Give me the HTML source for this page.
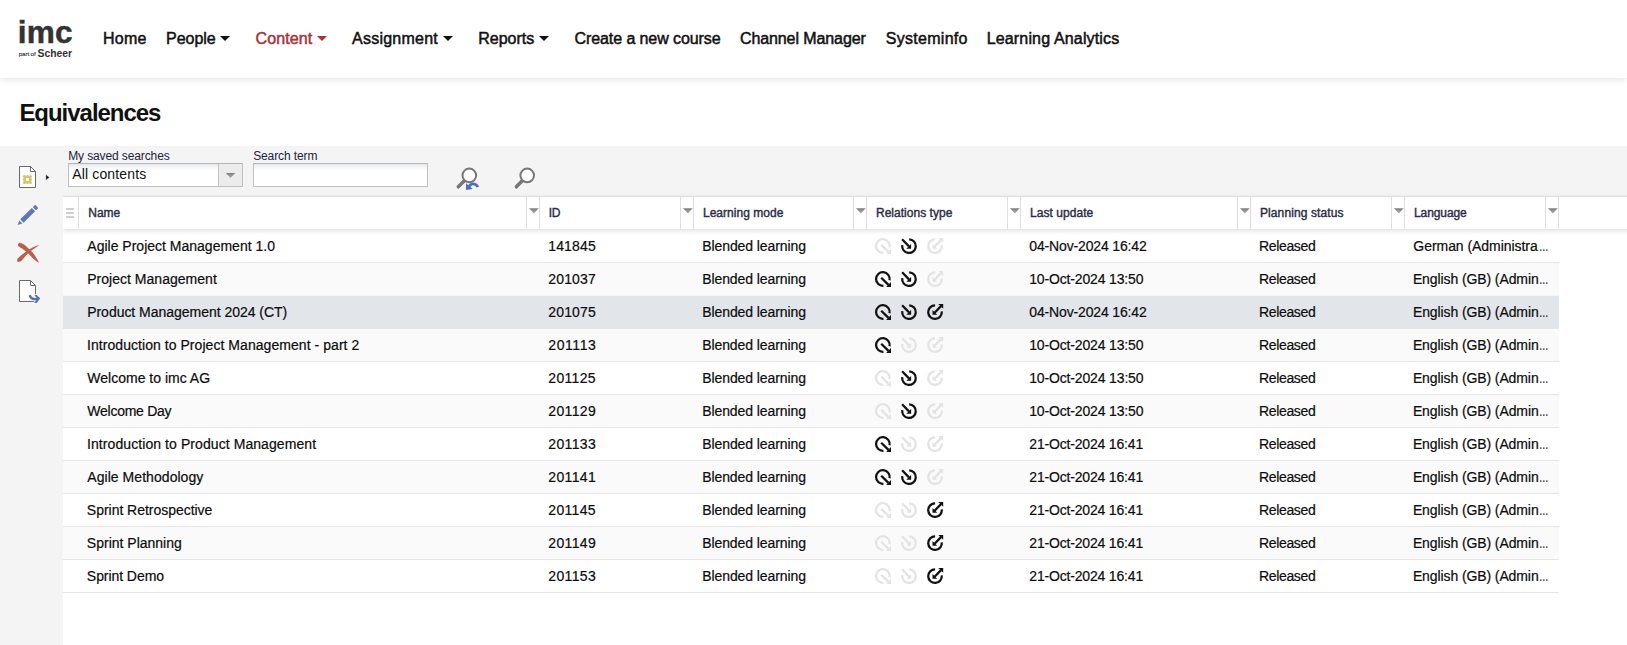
<!DOCTYPE html>
<html lang="en">
<head>
<meta charset="utf-8">
<title>Equivalences</title>
<style>
html,body{margin:0;padding:0;}
body{width:1627px;height:645px;overflow:hidden;background:#fff;position:relative;font-family:'Liberation Sans',sans-serif;}
.t{position:absolute;white-space:pre;display:block;}
.nav{-webkit-text-stroke:0.5px currentColor;}
.th{-webkit-text-stroke:0.4px currentColor;}
.td{-webkit-text-stroke:0.2px currentColor;}
.abs{position:absolute;}
#header{left:0;top:0;width:1627px;height:78px;background:#fff;box-shadow:0 1px 7px rgba(0,0,0,0.13);}
#graybar{left:0;top:146px;width:1627px;height:51px;background:#f4f4f4;}
#leftbar{left:0;top:146px;width:63px;height:499px;background:#f4f4f4;}
#thead{left:0;top:6px;width:1600px;height:33px;background:#fff;border-top:1px solid #dcdcdc;box-sizing:border-box;box-shadow:0 2px 5px rgba(0,0,0,0.12);}
.row{position:absolute;left:63px;width:1496px;height:32px;border-bottom:1px solid #e6e6e6;background:#fff;}
.row.even{background:#fafafa;}
.row.sel{background:#e2e6ea;border-bottom-color:#e2e6ea;}
.sep{position:absolute;top:197px;width:1px;height:32px;background:#dedede;}
.caret{position:absolute;width:0;height:0;border-left:5px solid transparent;border-right:5px solid transparent;border-top:5px solid #111;}
.dd{position:absolute;width:0;height:0;border-left:4.5px solid transparent;border-right:4.5px solid transparent;border-top:5px solid #8a8a8a;top:210px;}
.inp{position:absolute;box-sizing:border-box;background:linear-gradient(#e6eaee,#fff 6px);border:1px solid #c0c0c0;border-top-color:#b4b4b4;}
</style>
</head>
<body>
<div id="header" class="abs"></div>
<div id="graybar" class="abs"></div>
<div id="leftbar" class="abs"></div>
<div class="row" style="top:230px"></div>
<div class="row even" style="top:263px;border-bottom:1px dotted #eef0f2"></div>
<div class="row sel" style="top:296px"></div>
<div class="row even" style="top:329px"></div>
<div class="row" style="top:362px"></div>
<div class="row even" style="top:395px"></div>
<div class="row" style="top:428px"></div>
<div class="row even" style="top:461px"></div>
<div class="row" style="top:494px"></div>
<div class="row even" style="top:527px"></div>
<div class="row" style="top:560px"></div>
<div class="abs" style="left:63px;top:190px;width:1564px;height:60px;overflow:hidden;pointer-events:none"><div id="thead" class="abs"></div></div>
<div class="sep" style="left:78px"></div>
<div class="sep" style="left:526px"></div>
<div class="sep" style="left:539px"></div>
<div class="sep" style="left:680px"></div>
<div class="sep" style="left:693px"></div>
<div class="sep" style="left:853px"></div>
<div class="sep" style="left:866px"></div>
<div class="sep" style="left:1007px"></div>
<div class="sep" style="left:1020px"></div>
<div class="sep" style="left:1237px"></div>
<div class="sep" style="left:1250px"></div>
<div class="sep" style="left:1391px"></div>
<div class="sep" style="left:1404px"></div>
<div class="sep" style="left:1545px"></div>
<div class="sep" style="left:1558px"></div>
<svg class="abs" style="left:528px;top:207.4px" width="12" height="8" viewBox="0 0 12 8"><path d="M1 1.3 H10.7 L5.85 6.6 Z" fill="url(#gd)"/></svg>
<svg class="abs" style="left:682px;top:207.4px" width="12" height="8" viewBox="0 0 12 8"><path d="M1 1.3 H10.7 L5.85 6.6 Z" fill="url(#gd)"/></svg>
<svg class="abs" style="left:855px;top:207.4px" width="12" height="8" viewBox="0 0 12 8"><path d="M1 1.3 H10.7 L5.85 6.6 Z" fill="url(#gd)"/></svg>
<svg class="abs" style="left:1009px;top:207.4px" width="12" height="8" viewBox="0 0 12 8"><path d="M1 1.3 H10.7 L5.85 6.6 Z" fill="url(#gd)"/></svg>
<svg class="abs" style="left:1239px;top:207.4px" width="12" height="8" viewBox="0 0 12 8"><path d="M1 1.3 H10.7 L5.85 6.6 Z" fill="url(#gd)"/></svg>
<svg class="abs" style="left:1393px;top:207.4px" width="12" height="8" viewBox="0 0 12 8"><path d="M1 1.3 H10.7 L5.85 6.6 Z" fill="url(#gd)"/></svg>
<svg class="abs" style="left:1547px;top:207.4px" width="12" height="8" viewBox="0 0 12 8"><path d="M1 1.3 H10.7 L5.85 6.6 Z" fill="url(#gd)"/></svg>
<div class="caret" style="left:220.4px;top:36px;border-top-color:#111"></div>
<div class="caret" style="left:316.8px;top:36px;border-top-color:#a6343a"></div>
<div class="caret" style="left:443.2px;top:36px;border-top-color:#111"></div>
<div class="caret" style="left:539.2px;top:36px;border-top-color:#111"></div>
<div class="inp" style="left:68px;top:163px;width:175px;height:24px;"></div>
<div class="abs" style="left:218px;top:164px;width:24px;height:22px;background:#ececec;border-left:1px solid #c4c4c4;box-sizing:border-box;"></div>
<svg class="abs" style="left:225px;top:172px" width="12" height="8" viewBox="0 0 12 8"><defs><linearGradient id="gd" x1="0" y1="0" x2="0" y2="1"><stop offset="0" stop-color="#7d7d7d"/><stop offset="1" stop-color="#b0b0b0"/></linearGradient></defs><path d="M0.8 1 H10.3 L5.55 6 Z" fill="url(#gd)"/></svg>
<div class="inp" style="left:253px;top:163px;width:175px;height:24px;"></div>
<div class="abs" style="left:66px;top:208px;width:8px;height:2px;background:#cfcfcf;"></div>
<div class="abs" style="left:66px;top:212px;width:8px;height:2px;background:#cfcfcf;"></div>
<div class="abs" style="left:66px;top:216px;width:8px;height:2px;background:#cfcfcf;"></div>
<span class="t" id="logo" style="left:17.7px;top:13px;font-size:31.6px;line-height:38px;font-weight:bold;color:#333;letter-spacing:0.25px;-webkit-text-stroke:0.45px #333;">imc</span>
<span class="t" style="left:18.8px;top:50.4px;font-size:6.2px;line-height:8px;color:#3a3a3a;letter-spacing:-0.12px;-webkit-text-stroke:0.15px #3a3a3a;">part of</span>
<span class="t" style="left:37.6px;top:48.1px;font-size:10.4px;line-height:12px;font-weight:bold;color:#333;letter-spacing:-0.05px;">Scheer</span>
<svg class="abs" style="left:452px;top:162px" width="34" height="32" viewBox="452 162 34 32">
<line x1="464.3" y1="180.8" x2="458.3" y2="186.8" stroke="#777" stroke-width="3.5" stroke-linecap="round"/>
<circle cx="469.3" cy="175.4" r="6.8" fill="#fff" stroke="#777" stroke-width="2"/>
<path d="M466 190 L466 183.2 L468.2 185.2 C471 181.4 476.5 181.6 479.2 186.6 L476.6 187.4 C474.8 184.6 472 184.6 470.4 186.8 L472.6 188.9 Z" fill="#4e6db6"/>
</svg>
<svg class="abs" style="left:510px;top:162px" width="34" height="32" viewBox="510 162 34 32">
<line x1="522.2" y1="180.8" x2="516.4" y2="186.8" stroke="#777" stroke-width="3.5" stroke-linecap="round"/>
<circle cx="527.2" cy="175.4" r="6.8" fill="#fff" stroke="#777" stroke-width="2"/>
</svg>
<svg class="abs" style="left:15px;top:162px" width="40" height="30" viewBox="15 162 40 30">
<path d="M19.5 166.5 H30.5 L35.5 171.5 V187.5 H19.5 Z" fill="#fff" stroke="#6a6a6a" stroke-width="1"/>
<path d="M30.5 166.5 V171.5 H35.5" fill="none" stroke="#6a6a6a" stroke-width="1"/>
<g fill="#d8c36c"><circle cx="24.4" cy="176.5" r="1.5"/><circle cx="27.4" cy="176.4" r="1.5"/><circle cx="30.4" cy="176.5" r="1.5"/><circle cx="24.299999999999997" cy="179.5" r="1.5"/><circle cx="30.5" cy="179.5" r="1.5"/><circle cx="24.4" cy="182.5" r="1.5"/><circle cx="27.4" cy="182.6" r="1.5"/><circle cx="30.4" cy="182.5" r="1.5"/><path d="M24.4 176.5 L30.4 176.5 L30.4 182.5 L24.4 182.5 Z M27.4 177.2 L25.099999999999998 179.5 L27.4 181.8 L29.7 179.5 Z" fill-rule="evenodd"/></g>
<path d="M45.9 174.6 L49.4 177.4 L45.9 180.2 Z" fill="#15152a" stroke="#fff" stroke-opacity="0.6" stroke-width="0.5"/>
</svg>
<svg class="abs" style="left:14px;top:200px" width="30" height="30" viewBox="14 200 30 30">
<g transform="translate(17.7 225.1) rotate(-44.5)">
<path d="M0 0 L4.4 -2.2 L4.4 2.2 Z" fill="#5c78b8"/>
<rect x="5.9" y="-2.35" width="16.2" height="4.7" fill="#5c78b8"/>
<rect x="23.4" y="-2.35" width="3.3" height="4.7" rx="0.9" fill="#5c78b8"/>
</g></svg>
<svg class="abs" style="left:14px;top:238px" width="30" height="30" viewBox="14 238 30 30">
<path d="M20.05 242.90 C20.85 243.01 21.98 243.20 23.30 244.05 C24.62 244.90 26.40 246.61 27.95 248.00 C29.50 249.39 31.28 250.89 32.60 252.40 C33.92 253.91 34.80 255.38 35.85 257.05 C36.90 258.72 38.38 261.46 38.90 262.40 C39.42 263.34 39.38 262.89 38.95 262.70 C38.52 262.51 37.36 262.03 36.30 261.25 C35.24 260.47 33.99 259.32 32.60 258.00 C31.21 256.68 29.50 254.78 27.95 253.35 C26.40 251.92 24.77 250.48 23.30 249.40 C21.83 248.32 19.99 247.58 19.10 246.85 C18.21 246.12 18.05 245.57 17.95 245.00 C17.85 244.43 18.15 243.75 18.50 243.40 C18.85 243.05 19.25 242.79 20.05 242.90 Z" fill="#bc5f47"/>
<path d="M18.20 258.00 C18.97 257.19 20.58 255.83 21.90 254.75 C23.22 253.67 24.47 252.62 26.10 251.50 C27.73 250.38 30.15 248.89 31.70 248.00 C33.25 247.11 34.20 246.65 35.40 246.15 C36.60 245.65 38.31 245.14 38.90 245.00 C39.49 244.86 39.46 244.88 38.95 245.30 C38.44 245.73 36.98 246.75 35.85 247.55 C34.72 248.35 33.39 249.18 32.15 250.10 C30.91 251.02 29.64 251.94 28.40 253.10 C27.16 254.26 25.86 255.77 24.70 257.05 C23.54 258.33 22.46 259.98 21.45 260.80 C20.44 261.62 19.34 261.88 18.65 261.95 C17.96 262.02 17.53 261.59 17.30 261.20 C17.07 260.81 17.10 260.13 17.25 259.60 C17.40 259.07 17.43 258.81 18.20 258.00 Z" fill="#bc5f47"/>
</svg>
<svg class="abs" style="left:15px;top:276px" width="30" height="30" viewBox="15 276 30 30">
<path d="M19.5 280.5 H30.5 L35.5 285.5 V301.5 H19.5 Z" fill="#fff" stroke="#6a6a6a" stroke-width="1"/>
<path d="M30.5 280.5 V285.5 H35.5" fill="none" stroke="#6a6a6a" stroke-width="1"/>
<path d="M19 293.9 H36 V302 H19 Z" fill="none"/>
<g stroke="#fff" stroke-width="3.6" stroke-opacity="0.9" fill="none" stroke-linejoin="round" stroke-linecap="round"><path d="M30 296 C31 298.6 33.6 299.7 37.6 299.1"/><path d="M35.2 295.9 L39.3 298.3 L35.4 302.3"/></g>
<path d="M30 296 C31 298.6 33.6 299.7 37.6 299.1" fill="none" stroke="#5571b5" stroke-width="2.4" stroke-linecap="round"/>
<path d="M34.3 295.1 L36.6 295.1 L40.3 298.2 L36.7 303 L34.1 303 L37.4 298.9 Z" fill="#5571b5"/>
</svg>
<svg width="0" height="0" style="position:absolute"><defs>
<g id="r1"><path d="M14.55 9.2 A6.8 6.8 0 1 0 8.45 14.77" fill="none" stroke="currentColor" stroke-width="2.25"/><path d="M6.2 6.7 L13.5 13.9" stroke="currentColor" stroke-width="2.25" fill="none"/><path d="M16 16 L16 11.1 L11.1 16 Z" fill="currentColor"/></g>
<g id="r2"><path d="M8.2 1.36 A6.8 6.8 0 1 1 1.25 7.2" fill="none" stroke="currentColor" stroke-width="2.25"/><path d="M1.1 1.3 L8 8.4" stroke="currentColor" stroke-width="2.25" fill="none"/><path d="M10.1 10.7 L10.1 5.9 L5.3 10.7 Z" fill="currentColor"/></g>
<g id="r3"><path d="M8.1 1.35 A6.8 6.8 0 1 0 14.75 7.3" fill="none" stroke="currentColor" stroke-width="2.25"/><path d="M7.6 8.7 L14 2.1" stroke="currentColor" stroke-width="2.25" fill="none"/><path d="M16.2 -0.1 L11.3 -0.1 L16.2 4.8 Z" fill="currentColor"/><path d="M5.5 10.8 L5.5 6.1 L10.2 10.8 Z" fill="currentColor"/></g>
</defs></svg>
<svg class="abs" style="left:874.96px;top:237.85px;color:#e3e3e3;overflow:visible" width="17" height="17" viewBox="0 0 17 17"><use href="#r1"/></svg>
<svg class="abs" style="left:900.96px;top:237.85px;color:#111;overflow:visible" width="17" height="17" viewBox="0 0 17 17"><use href="#r2"/></svg>
<svg class="abs" style="left:926.96px;top:237.85px;color:#e3e3e3;overflow:visible" width="17" height="17" viewBox="0 0 17 17"><use href="#r3"/></svg>
<svg class="abs" style="left:874.96px;top:270.85px;color:#111;overflow:visible" width="17" height="17" viewBox="0 0 17 17"><use href="#r1"/></svg>
<svg class="abs" style="left:900.96px;top:270.85px;color:#111;overflow:visible" width="17" height="17" viewBox="0 0 17 17"><use href="#r2"/></svg>
<svg class="abs" style="left:926.96px;top:270.85px;color:#e3e3e3;overflow:visible" width="17" height="17" viewBox="0 0 17 17"><use href="#r3"/></svg>
<svg class="abs" style="left:874.96px;top:303.85px;color:#111;overflow:visible" width="17" height="17" viewBox="0 0 17 17"><use href="#r1"/></svg>
<svg class="abs" style="left:900.96px;top:303.85px;color:#111;overflow:visible" width="17" height="17" viewBox="0 0 17 17"><use href="#r2"/></svg>
<svg class="abs" style="left:926.96px;top:303.85px;color:#111;overflow:visible" width="17" height="17" viewBox="0 0 17 17"><use href="#r3"/></svg>
<svg class="abs" style="left:874.96px;top:336.85px;color:#111;overflow:visible" width="17" height="17" viewBox="0 0 17 17"><use href="#r1"/></svg>
<svg class="abs" style="left:900.96px;top:336.85px;color:#e3e3e3;overflow:visible" width="17" height="17" viewBox="0 0 17 17"><use href="#r2"/></svg>
<svg class="abs" style="left:926.96px;top:336.85px;color:#e3e3e3;overflow:visible" width="17" height="17" viewBox="0 0 17 17"><use href="#r3"/></svg>
<svg class="abs" style="left:874.96px;top:369.85px;color:#e3e3e3;overflow:visible" width="17" height="17" viewBox="0 0 17 17"><use href="#r1"/></svg>
<svg class="abs" style="left:900.96px;top:369.85px;color:#111;overflow:visible" width="17" height="17" viewBox="0 0 17 17"><use href="#r2"/></svg>
<svg class="abs" style="left:926.96px;top:369.85px;color:#e3e3e3;overflow:visible" width="17" height="17" viewBox="0 0 17 17"><use href="#r3"/></svg>
<svg class="abs" style="left:874.96px;top:402.85px;color:#e3e3e3;overflow:visible" width="17" height="17" viewBox="0 0 17 17"><use href="#r1"/></svg>
<svg class="abs" style="left:900.96px;top:402.85px;color:#111;overflow:visible" width="17" height="17" viewBox="0 0 17 17"><use href="#r2"/></svg>
<svg class="abs" style="left:926.96px;top:402.85px;color:#e3e3e3;overflow:visible" width="17" height="17" viewBox="0 0 17 17"><use href="#r3"/></svg>
<svg class="abs" style="left:874.96px;top:435.85px;color:#111;overflow:visible" width="17" height="17" viewBox="0 0 17 17"><use href="#r1"/></svg>
<svg class="abs" style="left:900.96px;top:435.85px;color:#e3e3e3;overflow:visible" width="17" height="17" viewBox="0 0 17 17"><use href="#r2"/></svg>
<svg class="abs" style="left:926.96px;top:435.85px;color:#e3e3e3;overflow:visible" width="17" height="17" viewBox="0 0 17 17"><use href="#r3"/></svg>
<svg class="abs" style="left:874.96px;top:468.85px;color:#111;overflow:visible" width="17" height="17" viewBox="0 0 17 17"><use href="#r1"/></svg>
<svg class="abs" style="left:900.96px;top:468.85px;color:#111;overflow:visible" width="17" height="17" viewBox="0 0 17 17"><use href="#r2"/></svg>
<svg class="abs" style="left:926.96px;top:468.85px;color:#e3e3e3;overflow:visible" width="17" height="17" viewBox="0 0 17 17"><use href="#r3"/></svg>
<svg class="abs" style="left:874.96px;top:501.85px;color:#e3e3e3;overflow:visible" width="17" height="17" viewBox="0 0 17 17"><use href="#r1"/></svg>
<svg class="abs" style="left:900.96px;top:501.85px;color:#e3e3e3;overflow:visible" width="17" height="17" viewBox="0 0 17 17"><use href="#r2"/></svg>
<svg class="abs" style="left:926.96px;top:501.85px;color:#111;overflow:visible" width="17" height="17" viewBox="0 0 17 17"><use href="#r3"/></svg>
<svg class="abs" style="left:874.96px;top:534.85px;color:#e3e3e3;overflow:visible" width="17" height="17" viewBox="0 0 17 17"><use href="#r1"/></svg>
<svg class="abs" style="left:900.96px;top:534.85px;color:#e3e3e3;overflow:visible" width="17" height="17" viewBox="0 0 17 17"><use href="#r2"/></svg>
<svg class="abs" style="left:926.96px;top:534.85px;color:#111;overflow:visible" width="17" height="17" viewBox="0 0 17 17"><use href="#r3"/></svg>
<svg class="abs" style="left:874.96px;top:567.85px;color:#e3e3e3;overflow:visible" width="17" height="17" viewBox="0 0 17 17"><use href="#r1"/></svg>
<svg class="abs" style="left:900.96px;top:567.85px;color:#e3e3e3;overflow:visible" width="17" height="17" viewBox="0 0 17 17"><use href="#r2"/></svg>
<svg class="abs" style="left:926.96px;top:567.85px;color:#111;overflow:visible" width="17" height="17" viewBox="0 0 17 17"><use href="#r3"/></svg>
<span class="t nav" style="left:103.06px;top:31.00px;font-size:16px;line-height:16px;letter-spacing:0.210px;color:#111;font-weight:normal;">Home</span>
<span class="t nav" style="left:166.06px;top:31.00px;font-size:16px;line-height:16px;letter-spacing:-0.033px;color:#111;font-weight:normal;">People</span>
<span class="t nav" style="left:255.59px;top:31.00px;font-size:16px;line-height:16px;letter-spacing:0.076px;color:#a6343a;font-weight:normal;">Content</span>
<span class="t nav" style="left:352.06px;top:31.00px;font-size:16px;line-height:16px;letter-spacing:0.238px;color:#111;font-weight:normal;">Assignment</span>
<span class="t nav" style="left:478.22px;top:31.00px;font-size:16px;line-height:16px;letter-spacing:-0.005px;color:#111;font-weight:normal;">Reports</span>
<span class="t nav" style="left:574.56px;top:31.00px;font-size:16px;line-height:16px;letter-spacing:-0.090px;color:#111;font-weight:normal;">Create a new course</span>
<span class="t nav" style="left:739.93px;top:31.00px;font-size:16px;line-height:16px;letter-spacing:-0.091px;color:#111;font-weight:normal;">Channel Manager</span>
<span class="t nav" style="left:885.80px;top:31.00px;font-size:16px;line-height:16px;letter-spacing:0.278px;color:#111;font-weight:normal;">Systeminfo</span>
<span class="t nav" style="left:986.68px;top:31.00px;font-size:16px;line-height:16px;letter-spacing:0.159px;color:#111;font-weight:normal;">Learning Analytics</span>
<span class="t " style="left:19.39px;top:101.00px;font-size:24px;line-height:24px;letter-spacing:-1.030px;color:#111;font-weight:bold;">Equivalences</span>
<span class="t " style="left:68.17px;top:150.00px;font-size:12px;line-height:12px;letter-spacing:-0.112px;color:#23233f;font-weight:normal;">My saved searches</span>
<span class="t " style="left:253.14px;top:150.00px;font-size:12px;line-height:12px;letter-spacing:-0.104px;color:#23233f;font-weight:normal;">Search term</span>
<span class="t " style="left:72.16px;top:167.00px;font-size:14px;line-height:14px;letter-spacing:0.156px;color:#111;font-weight:normal;">All contents</span>
<span class="t th" style="left:88.27px;top:207.00px;font-size:12px;line-height:12px;letter-spacing:0.001px;color:#2c2c48;font-weight:normal;">Name</span>
<span class="t th" style="left:548.77px;top:207.00px;font-size:12px;line-height:12px;letter-spacing:-0.311px;color:#2c2c48;font-weight:normal;">ID</span>
<span class="t th" style="left:702.94px;top:207.00px;font-size:12px;line-height:12px;letter-spacing:0.028px;color:#2c2c48;font-weight:normal;">Learning mode</span>
<span class="t th" style="left:875.98px;top:207.00px;font-size:12px;line-height:12px;letter-spacing:0.024px;color:#2c2c48;font-weight:normal;">Relations type</span>
<span class="t th" style="left:1029.94px;top:207.00px;font-size:12px;line-height:12px;letter-spacing:0.062px;color:#2c2c48;font-weight:normal;">Last update</span>
<span class="t th" style="left:1259.98px;top:207.00px;font-size:12px;line-height:12px;letter-spacing:0.104px;color:#2c2c48;font-weight:normal;">Planning status</span>
<span class="t th" style="left:1413.94px;top:207.00px;font-size:12px;line-height:12px;letter-spacing:-0.079px;color:#2c2c48;font-weight:normal;">Language</span>
<span class="t td" style="left:87.31px;top:239.00px;font-size:14px;line-height:14px;letter-spacing:0.003px;color:#0c0c0c;font-weight:normal;">Agile Project Management 1.0</span>
<span class="t td" style="left:548.19px;top:239.00px;font-size:14px;line-height:14px;letter-spacing:0.173px;color:#0c0c0c;font-weight:normal;">141845</span>
<span class="t td" style="left:702.16px;top:239.00px;font-size:14px;line-height:14px;letter-spacing:-0.075px;color:#0c0c0c;font-weight:normal;">Blended learning</span>
<span class="t td" style="left:1029.33px;top:239.00px;font-size:14px;line-height:14px;letter-spacing:-0.157px;color:#0c0c0c;font-weight:normal;">04-Nov-2024 16:42</span>
<span class="t td" style="left:1259.02px;top:239.00px;font-size:14px;line-height:14px;letter-spacing:-0.355px;color:#0c0c0c;font-weight:normal;">Released</span>
<span class="t td" style="left:1413.35px;top:239.00px;font-size:14px;line-height:14px;letter-spacing:-0.054px;color:#0c0c0c;font-weight:normal;">German (Administra</span>
<span class="t td" style="left:87.17px;top:272.00px;font-size:14px;line-height:14px;letter-spacing:0.028px;color:#0c0c0c;font-weight:normal;">Project Management</span>
<span class="t td" style="left:548.30px;top:272.00px;font-size:14px;line-height:14px;letter-spacing:0.138px;color:#0c0c0c;font-weight:normal;">201037</span>
<span class="t td" style="left:702.17px;top:272.00px;font-size:14px;line-height:14px;letter-spacing:-0.076px;color:#0c0c0c;font-weight:normal;">Blended learning</span>
<span class="t td" style="left:1029.19px;top:272.00px;font-size:14px;line-height:14px;letter-spacing:-0.150px;color:#0c0c0c;font-weight:normal;">10-Oct-2024 13:50</span>
<span class="t td" style="left:1259.02px;top:272.00px;font-size:14px;line-height:14px;letter-spacing:-0.355px;color:#0c0c0c;font-weight:normal;">Released</span>
<span class="t td" style="left:1412.88px;top:272.00px;font-size:14px;line-height:14px;letter-spacing:-0.099px;color:#0c0c0c;font-weight:normal;">English (GB) (Admin</span>
<span class="t td" style="left:87.18px;top:305.00px;font-size:14px;line-height:14px;letter-spacing:-0.026px;color:#0c0c0c;font-weight:normal;">Product Management 2024 (CT)</span>
<span class="t td" style="left:548.31px;top:305.00px;font-size:14px;line-height:14px;letter-spacing:0.151px;color:#0c0c0c;font-weight:normal;">201075</span>
<span class="t td" style="left:702.18px;top:305.00px;font-size:14px;line-height:14px;letter-spacing:-0.076px;color:#0c0c0c;font-weight:normal;">Blended learning</span>
<span class="t td" style="left:1029.34px;top:305.00px;font-size:14px;line-height:14px;letter-spacing:-0.157px;color:#0c0c0c;font-weight:normal;">04-Nov-2024 16:42</span>
<span class="t td" style="left:1259.03px;top:305.00px;font-size:14px;line-height:14px;letter-spacing:-0.355px;color:#0c0c0c;font-weight:normal;">Released</span>
<span class="t td" style="left:1412.91px;top:305.00px;font-size:14px;line-height:14px;letter-spacing:-0.100px;color:#0c0c0c;font-weight:normal;">English (GB) (Admin</span>
<span class="t td" style="left:87.02px;top:338.00px;font-size:14px;line-height:14px;letter-spacing:0.053px;color:#0c0c0c;font-weight:normal;">Introduction to Project Management - part 2</span>
<span class="t td" style="left:548.30px;top:338.00px;font-size:14px;line-height:14px;letter-spacing:0.575px;color:#0c0c0c;font-weight:normal;">201113</span>
<span class="t td" style="left:702.17px;top:338.00px;font-size:14px;line-height:14px;letter-spacing:-0.076px;color:#0c0c0c;font-weight:normal;">Blended learning</span>
<span class="t td" style="left:1029.19px;top:338.00px;font-size:14px;line-height:14px;letter-spacing:-0.150px;color:#0c0c0c;font-weight:normal;">10-Oct-2024 13:50</span>
<span class="t td" style="left:1259.02px;top:338.00px;font-size:14px;line-height:14px;letter-spacing:-0.355px;color:#0c0c0c;font-weight:normal;">Released</span>
<span class="t td" style="left:1412.88px;top:338.00px;font-size:14px;line-height:14px;letter-spacing:-0.099px;color:#0c0c0c;font-weight:normal;">English (GB) (Admin</span>
<span class="t td" style="left:87.35px;top:371.00px;font-size:14px;line-height:14px;letter-spacing:0.004px;color:#0c0c0c;font-weight:normal;">Welcome to imc AG</span>
<span class="t td" style="left:548.29px;top:371.00px;font-size:14px;line-height:14px;letter-spacing:0.325px;color:#0c0c0c;font-weight:normal;">201125</span>
<span class="t td" style="left:702.16px;top:371.00px;font-size:14px;line-height:14px;letter-spacing:-0.075px;color:#0c0c0c;font-weight:normal;">Blended learning</span>
<span class="t td" style="left:1029.19px;top:371.00px;font-size:14px;line-height:14px;letter-spacing:-0.149px;color:#0c0c0c;font-weight:normal;">10-Oct-2024 13:50</span>
<span class="t td" style="left:1259.02px;top:371.00px;font-size:14px;line-height:14px;letter-spacing:-0.355px;color:#0c0c0c;font-weight:normal;">Released</span>
<span class="t td" style="left:1412.89px;top:371.00px;font-size:14px;line-height:14px;letter-spacing:-0.100px;color:#0c0c0c;font-weight:normal;">English (GB) (Admin</span>
<span class="t td" style="left:87.35px;top:404.00px;font-size:14px;line-height:14px;letter-spacing:-0.264px;color:#0c0c0c;font-weight:normal;">Welcome Day</span>
<span class="t td" style="left:548.30px;top:404.00px;font-size:14px;line-height:14px;letter-spacing:0.347px;color:#0c0c0c;font-weight:normal;">201129</span>
<span class="t td" style="left:702.17px;top:404.00px;font-size:14px;line-height:14px;letter-spacing:-0.076px;color:#0c0c0c;font-weight:normal;">Blended learning</span>
<span class="t td" style="left:1029.19px;top:404.00px;font-size:14px;line-height:14px;letter-spacing:-0.150px;color:#0c0c0c;font-weight:normal;">10-Oct-2024 13:50</span>
<span class="t td" style="left:1259.02px;top:404.00px;font-size:14px;line-height:14px;letter-spacing:-0.355px;color:#0c0c0c;font-weight:normal;">Released</span>
<span class="t td" style="left:1412.88px;top:404.00px;font-size:14px;line-height:14px;letter-spacing:-0.099px;color:#0c0c0c;font-weight:normal;">English (GB) (Admin</span>
<span class="t td" style="left:87.01px;top:437.00px;font-size:14px;line-height:14px;letter-spacing:0.079px;color:#0c0c0c;font-weight:normal;">Introduction to Product Management</span>
<span class="t td" style="left:548.29px;top:437.00px;font-size:14px;line-height:14px;letter-spacing:0.346px;color:#0c0c0c;font-weight:normal;">201133</span>
<span class="t td" style="left:702.16px;top:437.00px;font-size:14px;line-height:14px;letter-spacing:-0.075px;color:#0c0c0c;font-weight:normal;">Blended learning</span>
<span class="t td" style="left:1029.29px;top:437.00px;font-size:14px;line-height:14px;letter-spacing:-0.177px;color:#0c0c0c;font-weight:normal;">21-Oct-2024 16:41</span>
<span class="t td" style="left:1259.02px;top:437.00px;font-size:14px;line-height:14px;letter-spacing:-0.355px;color:#0c0c0c;font-weight:normal;">Released</span>
<span class="t td" style="left:1412.89px;top:437.00px;font-size:14px;line-height:14px;letter-spacing:-0.100px;color:#0c0c0c;font-weight:normal;">English (GB) (Admin</span>
<span class="t td" style="left:87.31px;top:470.00px;font-size:14px;line-height:14px;letter-spacing:0.051px;color:#0c0c0c;font-weight:normal;">Agile Methodology</span>
<span class="t td" style="left:548.30px;top:470.00px;font-size:14px;line-height:14px;letter-spacing:0.346px;color:#0c0c0c;font-weight:normal;">201141</span>
<span class="t td" style="left:702.17px;top:470.00px;font-size:14px;line-height:14px;letter-spacing:-0.076px;color:#0c0c0c;font-weight:normal;">Blended learning</span>
<span class="t td" style="left:1029.30px;top:470.00px;font-size:14px;line-height:14px;letter-spacing:-0.178px;color:#0c0c0c;font-weight:normal;">21-Oct-2024 16:41</span>
<span class="t td" style="left:1259.02px;top:470.00px;font-size:14px;line-height:14px;letter-spacing:-0.355px;color:#0c0c0c;font-weight:normal;">Released</span>
<span class="t td" style="left:1412.88px;top:470.00px;font-size:14px;line-height:14px;letter-spacing:-0.099px;color:#0c0c0c;font-weight:normal;">English (GB) (Admin</span>
<span class="t td" style="left:86.86px;top:503.00px;font-size:14px;line-height:14px;letter-spacing:-0.031px;color:#0c0c0c;font-weight:normal;">Sprint Retrospective</span>
<span class="t td" style="left:548.29px;top:503.00px;font-size:14px;line-height:14px;letter-spacing:0.325px;color:#0c0c0c;font-weight:normal;">201145</span>
<span class="t td" style="left:702.16px;top:503.00px;font-size:14px;line-height:14px;letter-spacing:-0.075px;color:#0c0c0c;font-weight:normal;">Blended learning</span>
<span class="t td" style="left:1029.29px;top:503.00px;font-size:14px;line-height:14px;letter-spacing:-0.177px;color:#0c0c0c;font-weight:normal;">21-Oct-2024 16:41</span>
<span class="t td" style="left:1259.02px;top:503.00px;font-size:14px;line-height:14px;letter-spacing:-0.355px;color:#0c0c0c;font-weight:normal;">Released</span>
<span class="t td" style="left:1412.89px;top:503.00px;font-size:14px;line-height:14px;letter-spacing:-0.100px;color:#0c0c0c;font-weight:normal;">English (GB) (Admin</span>
<span class="t td" style="left:86.86px;top:536.00px;font-size:14px;line-height:14px;letter-spacing:-0.004px;color:#0c0c0c;font-weight:normal;">Sprint Planning</span>
<span class="t td" style="left:548.30px;top:536.00px;font-size:14px;line-height:14px;letter-spacing:0.347px;color:#0c0c0c;font-weight:normal;">201149</span>
<span class="t td" style="left:702.17px;top:536.00px;font-size:14px;line-height:14px;letter-spacing:-0.076px;color:#0c0c0c;font-weight:normal;">Blended learning</span>
<span class="t td" style="left:1029.30px;top:536.00px;font-size:14px;line-height:14px;letter-spacing:-0.178px;color:#0c0c0c;font-weight:normal;">21-Oct-2024 16:41</span>
<span class="t td" style="left:1259.02px;top:536.00px;font-size:14px;line-height:14px;letter-spacing:-0.355px;color:#0c0c0c;font-weight:normal;">Released</span>
<span class="t td" style="left:1412.88px;top:536.00px;font-size:14px;line-height:14px;letter-spacing:-0.099px;color:#0c0c0c;font-weight:normal;">English (GB) (Admin</span>
<span class="t td" style="left:86.86px;top:569.00px;font-size:14px;line-height:14px;letter-spacing:-0.065px;color:#0c0c0c;font-weight:normal;">Sprint Demo</span>
<span class="t td" style="left:548.29px;top:569.00px;font-size:14px;line-height:14px;letter-spacing:0.346px;color:#0c0c0c;font-weight:normal;">201153</span>
<span class="t td" style="left:702.16px;top:569.00px;font-size:14px;line-height:14px;letter-spacing:-0.075px;color:#0c0c0c;font-weight:normal;">Blended learning</span>
<span class="t td" style="left:1029.29px;top:569.00px;font-size:14px;line-height:14px;letter-spacing:-0.177px;color:#0c0c0c;font-weight:normal;">21-Oct-2024 16:41</span>
<span class="t td" style="left:1259.02px;top:569.00px;font-size:14px;line-height:14px;letter-spacing:-0.355px;color:#0c0c0c;font-weight:normal;">Released</span>
<span class="t td" style="left:1412.89px;top:569.00px;font-size:14px;line-height:14px;letter-spacing:-0.100px;color:#0c0c0c;font-weight:normal;">English (GB) (Admin</span>
<span class="t td" style="left:1538.8px;top:239px;font-size:14px;line-height:14px;color:#0c0c0c;transform:scaleX(0.68);transform-origin:0 0;">…</span>
<span class="t td" style="left:1538.8px;top:272px;font-size:14px;line-height:14px;color:#0c0c0c;transform:scaleX(0.68);transform-origin:0 0;">…</span>
<span class="t td" style="left:1538.8px;top:305px;font-size:14px;line-height:14px;color:#0c0c0c;transform:scaleX(0.68);transform-origin:0 0;">…</span>
<span class="t td" style="left:1538.8px;top:338px;font-size:14px;line-height:14px;color:#0c0c0c;transform:scaleX(0.68);transform-origin:0 0;">…</span>
<span class="t td" style="left:1538.8px;top:371px;font-size:14px;line-height:14px;color:#0c0c0c;transform:scaleX(0.68);transform-origin:0 0;">…</span>
<span class="t td" style="left:1538.8px;top:404px;font-size:14px;line-height:14px;color:#0c0c0c;transform:scaleX(0.68);transform-origin:0 0;">…</span>
<span class="t td" style="left:1538.8px;top:437px;font-size:14px;line-height:14px;color:#0c0c0c;transform:scaleX(0.68);transform-origin:0 0;">…</span>
<span class="t td" style="left:1538.8px;top:470px;font-size:14px;line-height:14px;color:#0c0c0c;transform:scaleX(0.68);transform-origin:0 0;">…</span>
<span class="t td" style="left:1538.8px;top:503px;font-size:14px;line-height:14px;color:#0c0c0c;transform:scaleX(0.68);transform-origin:0 0;">…</span>
<span class="t td" style="left:1538.8px;top:536px;font-size:14px;line-height:14px;color:#0c0c0c;transform:scaleX(0.68);transform-origin:0 0;">…</span>
<span class="t td" style="left:1538.8px;top:569px;font-size:14px;line-height:14px;color:#0c0c0c;transform:scaleX(0.68);transform-origin:0 0;">…</span>
</body>
</html>
